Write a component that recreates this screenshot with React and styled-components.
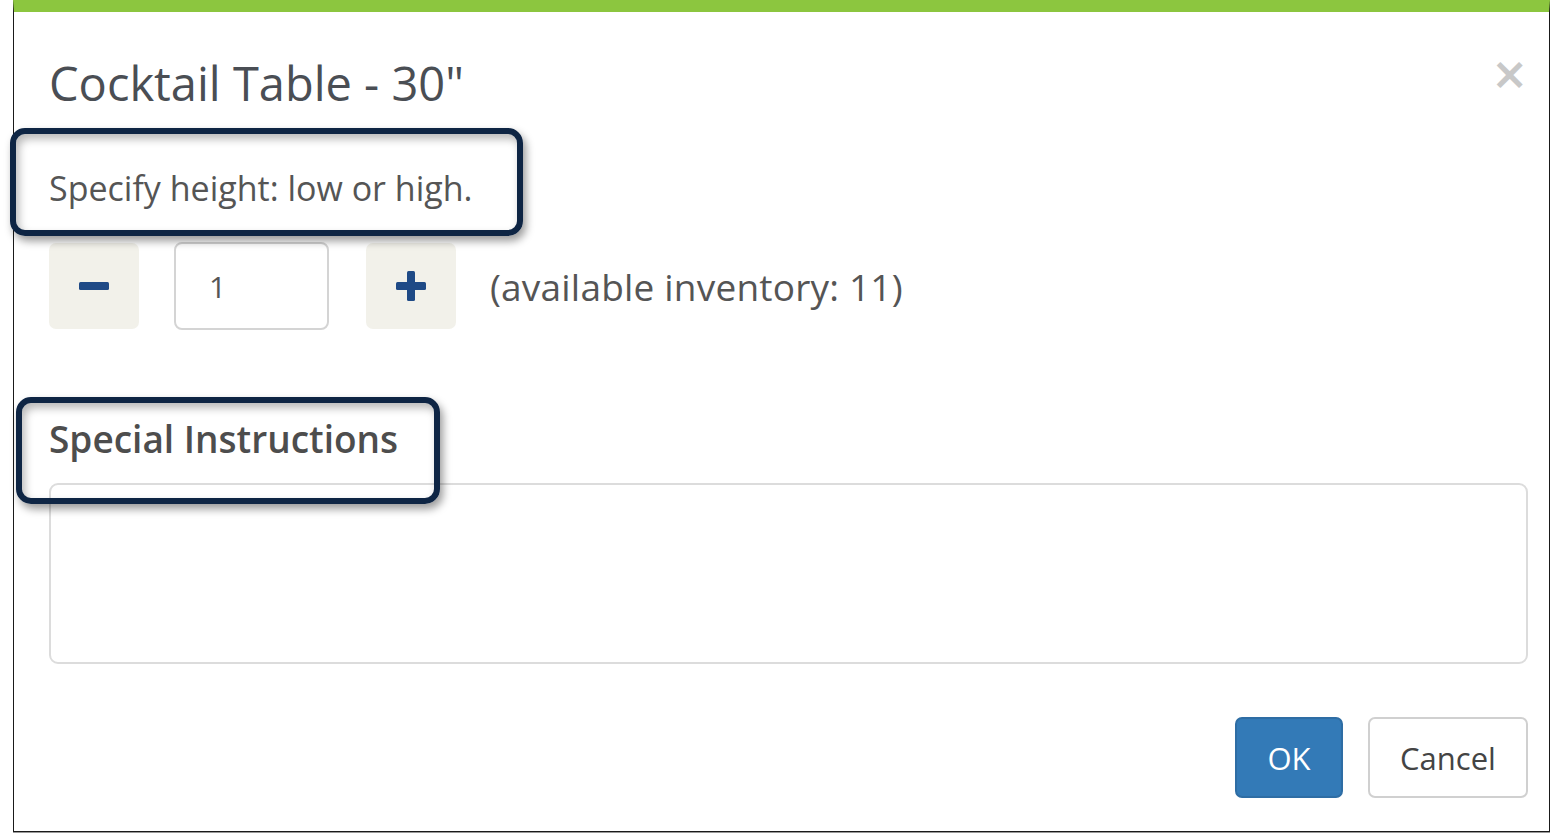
import React from "react";
import styled, { createGlobalStyle } from "styled-components";

const Global = createGlobalStyle`
  html, body { margin: 0; padding: 0; background: #fff; }
  body { font-family: "Open Sans", "Noto Sans", sans-serif; color: #555; }
  * { box-sizing: border-box; }
`;

const Page = styled.div`
  width: 1551px;
  height: 833px;
  padding-left: 13px;
  background: #fff;
`;

const Modal = styled.div`
  width: 1537px;
  height: 832px;
  border: 1px solid #1a1a1a;
  border-top: 12px solid #8cc63f;
  box-shadow: 0 1px 0 #999;
  display: flex;
  flex-direction: column;
  padding: 0 21px 0 35px;
`;

const Header = styled.div`
  display: flex;
  justify-content: space-between;
  align-items: flex-start;
  padding-top: 39px;
`;

const Title = styled.h1`
  margin: 0;
  font-size: 47px;
  font-weight: 400;
  line-height: 64px;
  color: #4a4e54;
`;

const Close = styled.button`
  border: 0;
  background: none;
  padding: 0;
  margin-top: 1px;
  color: #c8c8c8;
  font-size: 44px;
  font-weight: 700;
  line-height: 1;
  font-family: "DejaVu Sans", sans-serif;
`;

const Callout = styled.div`
  position: relative;
  align-self: flex-start;
  margin-top: ${(p) => p.$mt}px;
`;

const Ring = styled.div`
  position: absolute;
  top: ${(p) => p.$t}px;
  left: ${(p) => p.$l}px;
  right: ${(p) => p.$r}px;
  bottom: ${(p) => p.$b}px;
  border: 6px solid #0e2544;
  border-radius: 15px;
  box-shadow: 3px 5px 8px rgba(0, 0, 0, 0.4), inset 3px 5px 8px rgba(0, 0, 0, 0.28);
  pointer-events: none;
`;

const Note = styled.p`
  margin: 0;
  font-size: 34px;
  line-height: 48px;
  color: #555;
`;

const QtyRow = styled.div`
  display: flex;
  align-items: center;
  margin-top: 30px;
  height: 88px;
`;

const StepButton = styled.button`
  width: 90px;
  height: 86px;
  border: 0;
  border-radius: 7px;
  background: #f2f1ea;
  display: flex;
  align-items: center;
  justify-content: center;
  padding: 0;
`;

const QtyInput = styled.div`
  width: 155px;
  height: 88px;
  margin: 0 37px 0 35px;
  border: 2px solid #d4d4d4;
  border-radius: 8px;
  display: flex;
  align-items: center;
  padding-left: 33px;
  font-size: 30px;
  color: #555;
`;

const Inventory = styled.span`
  margin-left: 34px;
  font-size: 37px;
  letter-spacing: 0.2px;
  color: #555;
`;

const SectionLabel = styled.h2`
  margin: 0;
  font-size: 37px;
  font-weight: 600;
  line-height: 52px;
  color: #4d4d4d;
`;

const TextArea = styled.div`
  margin-top: 18px;
  height: 181px;
  width: 1479px;
  border: 2px solid #dcdcdc;
  border-radius: 9px;
`;

const Footer = styled.div`
  display: flex;
  justify-content: flex-end;
  gap: 25px;
  margin-top: 53px;
  width: 1479px;
`;

const Btn = styled.button`
  height: 81px;
  width: ${(p) => (p.$primary ? 108 : 160)}px;
  padding: 0;
  border-radius: 7px;
  border: 2px solid ${(p) => (p.$primary ? "#2e6da4" : "#d0d0d0")};
  background: ${(p) => (p.$primary ? "#337ab7" : "#fff")};
  color: ${(p) => (p.$primary ? "#fff" : "#444")};
  font-family: "Open Sans", sans-serif;
  font-size: 31px;
`;

const Minus = () => (
  <svg width="30" height="9" viewBox="0 0 30 9">
    <rect x="0" y="0" width="30" height="8" rx="1.5" fill="#1f4a86" />
  </svg>
);

const Plus = () => (
  <svg width="30" height="30" viewBox="0 0 30 30">
    <rect x="0" y="11" width="30" height="8" rx="1.5" fill="#1f4a86" />
    <rect x="11" y="0" width="8" height="30" rx="1.5" fill="#1f4a86" />
  </svg>
);

export default function App() {
  return (
    <Page>
      <Global />
      <Modal>
        <Header>
          <Title>Cocktail Table - 30"</Title>
          <Close aria-label="close">×</Close>
        </Header>
        <Callout $mt={49}>
          <Note>Specify height: low or high.</Note>
          <Ring $t={-36} $l={-39} $r={-50} $b={-24} />
        </Callout>
        <QtyRow>
          <StepButton aria-label="decrease"><Minus /></StepButton>
          <QtyInput>1</QtyInput>
          <StepButton aria-label="increase"><Plus /></StepButton>
          <Inventory>(available inventory: 11)</Inventory>
        </QtyRow>
        <Callout $mt={83}>
          <SectionLabel>Special Instructions</SectionLabel>
          <Ring $t={-16} $l={-33} $r={-42} $b={-39} />
        </Callout>
        <TextArea />
        <Footer>
          <Btn $primary>OK</Btn>
          <Btn>Cancel</Btn>
        </Footer>
      </Modal>
    </Page>
  );
}
